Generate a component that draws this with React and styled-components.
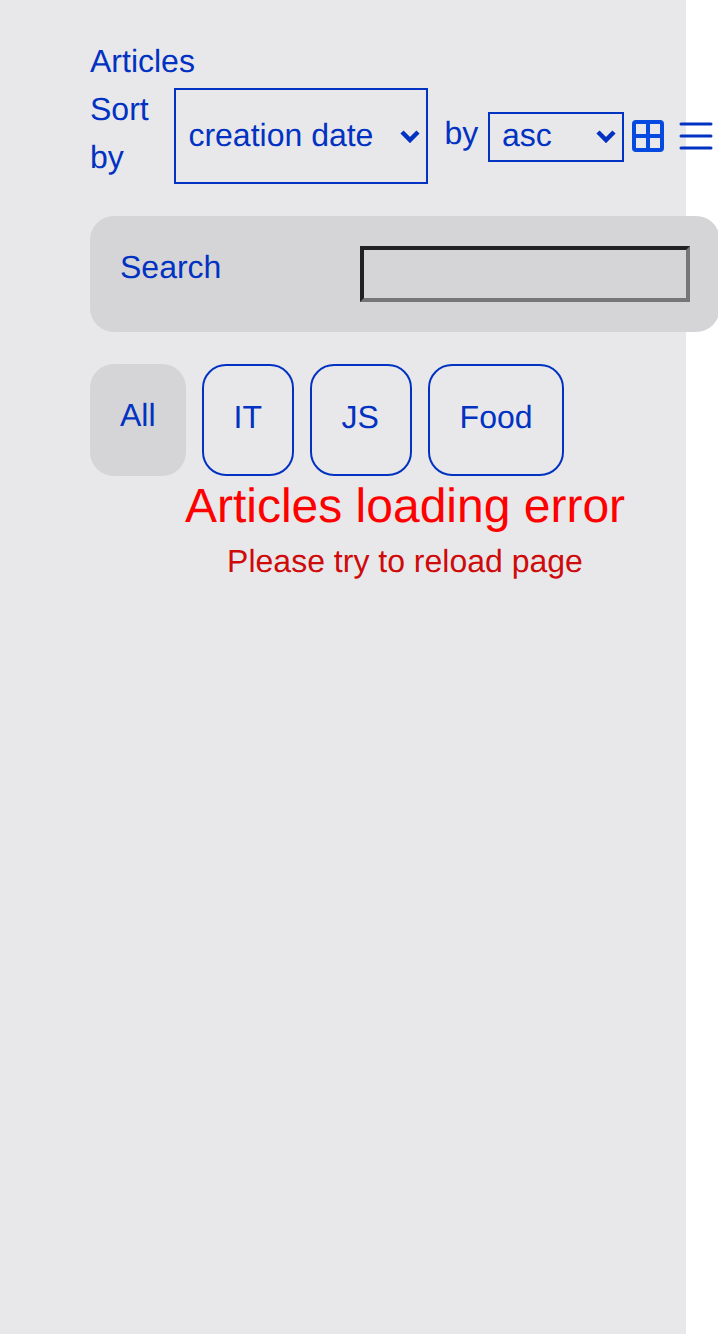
import React from "react";
import styled, { createGlobalStyle } from "styled-components";

const Global = createGlobalStyle`
  * { box-sizing: border-box; }
  html, body { margin: 0; background: #fff; overflow: hidden; }
  body {
    font: 32px/48px "Liberation Sans", Arial, sans-serif;
    color: #0232c2;
    text-rendering: geometricPrecision;
  }
`;

const Page = styled.main`
  width: 686px;
  height: 1334px;
  padding: 40px 40px 40px 90px;
  background: #e8e8ea;
`;

const Title = styled.div`
  height: 48px;
  line-height: 42px;
`;

const Toolbar = styled.div`
  display: flex;
  align-items: center;
  width: 628px;
  height: 96px;
`;

const SortLabel = styled.span`
  width: 84px;
  height: 96px;
  flex: none;
  padding-right: 20px;
  margin-top: -6px;
`;

const SelectBox = styled.button`
  display: flex;
  align-items: center;
  justify-content: space-between;
  flex: none;
  width: ${(p) => p.$width}px;
  height: ${(p) => p.$height}px;
  margin-top: ${(p) => p.$offset || 0}px;
  padding: 0 6px ${(p) => (p.$offset ? 4 : 2)}px ${(p) => (p.$offset ? 12 : 12.4)}px;
  border: 2px solid #0232c2;
  background: transparent;
  color: inherit;
  font: inherit;
  text-rendering: inherit;
`;

const Chevron = styled.svg`
  width: 20px;
  height: 14px;
  margin-top: 2px;
  fill: none;
  stroke: #0232c2;
  stroke-width: 4.5;
`;

const ByLabel = styled.span`
  width: 60px;
  padding-left: 16.4px;
  margin-top: -6px;
`;

const ViewIcon = styled.svg`
  flex: none;
  width: ${(p) => p.$width}px;
  height: 32px;
  margin-left: ${(p) => p.$gap}px;
  fill: none;
  stroke: ${(p) => p.$color};
`;

const SearchCard = styled.label`
  display: flex;
  align-items: center;
  justify-content: space-between;
  width: 630px;
  height: 116px;
  margin-top: 32px;
  padding: 30px;
  border-radius: 24px;
  background: #d5d5d7;
`;

const SearchText = styled.span`
  margin-top: -14px;
`;

const SearchInput = styled.input`
  width: 330px;
  height: 56px;
  border: 4px inset #767676;
  border-radius: 0;
  background: transparent;
  font: inherit;
`;

const Tabs = styled.nav`
  display: flex;
  gap: 16px;
  margin-top: 32px;
`;

const Tab = styled.button`
  width: ${(p) => p.$width}px;
  height: 112px;
  padding: 0 0 ${(p) => (p.$active ? 10 : 6)}px ${(p) => (p.$active ? 30 : 29.6)}px;
  border: ${(p) => (p.$active ? "0" : "2px solid #0232c2")};
  border-radius: 24px;
  background: ${(p) => (p.$active ? "#d5d5d7" : "transparent")};
  color: inherit;
  font: inherit;
  text-align: left;
  text-rendering: inherit;
`;

const ErrorMessage = styled.section`
  width: 630px;
  text-align: center;
`;

const ErrorTitle = styled.div`
  height: 60px;
  font-size: 48px;
  line-height: 62px;
  color: #ff0000;
`;

const ErrorText = styled.div`
  line-height: 50px;
  color: #ce0a0a;
`;

function Select({ width, height, offset, children }) {
  return (
    <SelectBox $width={width} $height={height} $offset={offset}>
      {children}
      <Chevron viewBox="0 0 20 14"><path d="M2 3l8 8 8-8" /></Chevron>
    </SelectBox>
  );
}

export default function App() {
  return (
    <>
      <Global />
      <Page>
        <Title>Articles</Title>
        <Toolbar>
          <SortLabel>Sort by</SortLabel>
          <Select width={254} height={96}>creation date</Select>
          <ByLabel>by</ByLabel>
          <Select width={136} height={50} offset={2}>asc</Select>
          <ViewIcon $width={32} $gap={8} $color="#0449e0" viewBox="0 0 32 32" strokeWidth="4">
            <rect x="2" y="2" width="28" height="28" rx="2" />
            <path d="M16 2v28M2 16h28" />
          </ViewIcon>
          <ViewIcon $width={34} $gap={15} $color="#0232c2" viewBox="0 0 34 32" strokeWidth="3" strokeLinecap="round">
            <path d="M2 4h30M2 16h30M2 28h30" />
          </ViewIcon>
        </Toolbar>
        <SearchCard>
          <SearchText>Search</SearchText>
          <SearchInput />
        </SearchCard>
        <Tabs>
          <Tab $active $width={96}>All</Tab>
          <Tab $width={92}>IT</Tab>
          <Tab $width={102}>JS</Tab>
          <Tab $width={136}>Food</Tab>
        </Tabs>
        <ErrorMessage>
          <ErrorTitle>Articles loading error</ErrorTitle>
          <ErrorText>Please try to reload page</ErrorText>
        </ErrorMessage>
      </Page>
    </>
  );
}
